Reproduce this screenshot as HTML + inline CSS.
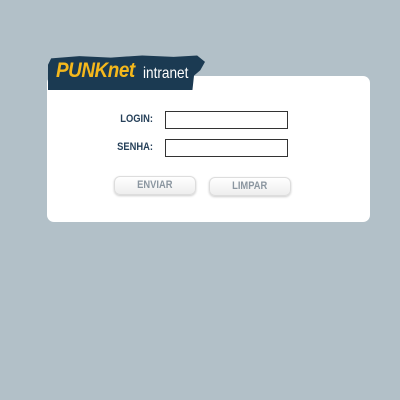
<!DOCTYPE html>
<html><head><style>
body{margin:0;width:400px;height:400px;background:#b2c0c8;position:relative;overflow:hidden;font-family:"Liberation Sans",sans-serif}
.panel{position:absolute;left:47px;top:76px;width:323px;height:146px;background:#fff;border-radius:7px}
.ban{position:absolute;left:48px;top:54px;width:157px;height:36px;background:#1b3a52;clip-path:polygon(2% 12%,20% 6%,40% 10%,60% 4%,80% 8%,95% 4%,100% 22%,97% 45%,93% 60%,92% 100%,0 100%,0 30%)}
.t1{position:absolute;left:56px;top:59px;font-size:21px;font-weight:bold;font-style:italic;color:#f5b81c;letter-spacing:-0.5px;transform:scaleX(0.9);transform-origin:left}
.t2{position:absolute;left:143px;top:65px;font-size:16px;color:#fff;transform:scaleX(0.85);transform-origin:left}
.lab{position:absolute;font-size:11px;font-weight:bold;color:#27415a;text-align:right;width:60px;transform:scaleX(0.85);transform-origin:right}
.in{position:absolute;left:165px;width:121px;height:16px;border:1px solid #333;background:#fff}
.btn{position:absolute;width:80px;height:17px;border:1px solid #ddd;border-radius:6px;background:linear-gradient(#fff,#eee);box-shadow:0 1px 2px #ccc;font-size:11px;font-weight:bold;color:#8b96a0;text-align:center;line-height:17px}
.btn span{display:inline-block;transform:scaleX(0.85)}
</style></head><body>
<div class="panel"></div>
<div class="ban"></div>
<div class="t1">PUNKnet</div>
<div class="t2">intranet</div>
<div class="lab" style="left:93px;top:113px">LOGIN:</div>
<div class="lab" style="left:93px;top:141px">SENHA:</div>
<div class="in" style="top:111px"></div>
<div class="in" style="top:139px"></div>
<div class="btn" style="left:114px;top:176px"><span>ENVIAR</span></div>
<div class="btn" style="left:209px;top:177px"><span>LIMPAR</span></div>
</body></html>
